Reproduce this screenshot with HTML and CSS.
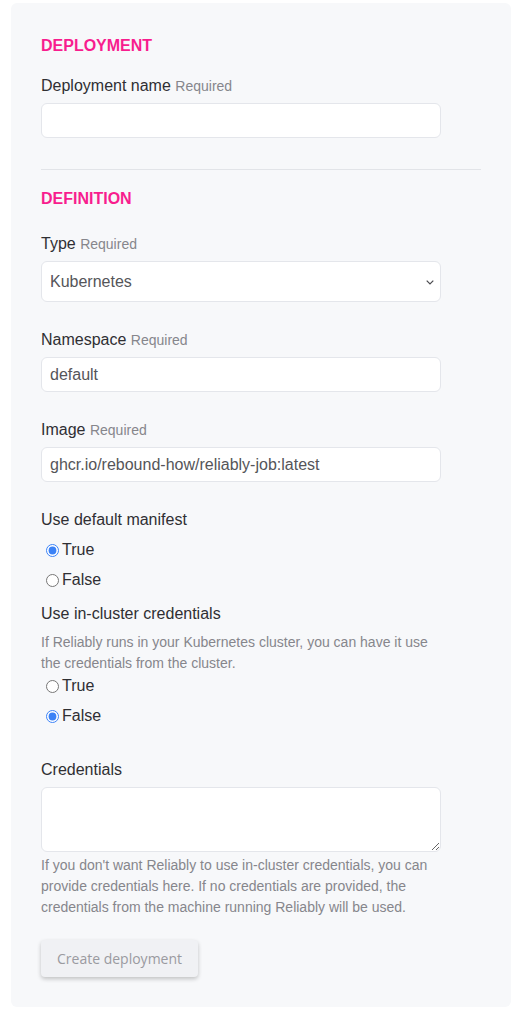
FILE: index.html
```html
<!DOCTYPE html>
<html lang="en">
<head>
<meta charset="utf-8">
<title>Create deployment</title>
<link rel="stylesheet" href="styles.css">
</head>
<body>
<form class="card">
  <h2 class="section-title">DEPLOYMENT</h2>
  <div class="field first">
    <label class="label">Deployment name <span class="req">Required</span></label>
    <input class="input" type="text">
  </div>
  <hr class="divider">
  <h2 class="section-title def">DEFINITION</h2>
  <div class="field type">
    <label class="label">Type <span class="req">Required</span></label>
    <div class="select-wrap">
      <select class="select"><option>Kubernetes</option></select>
      <svg class="chevron" width="8" height="5" viewBox="0 0 8 5" aria-hidden="true"><path d="M0.7 0.7 L4 4 L7.3 0.7" fill="none" stroke="#4a4a4f" stroke-width="1.2"/></svg>
    </div>
  </div>
  <div class="field gap">
    <label class="label">Namespace <span class="req">Required</span></label>
    <input class="input" type="text" value="default">
  </div>
  <div class="field gap">
    <label class="label">Image <span class="req">Required</span></label>
    <input class="input" type="text" value="ghcr.io/rebound-how/reliably-job:latest">
  </div>
  <div class="group gap">
    <div class="label">Use default manifest</div>
    <label class="radio r1"><input type="radio" name="manifest" checked>True</label>
    <label class="radio"><input type="radio" name="manifest">False</label>
  </div>
  <div class="group cluster">
    <div class="label">Use in-cluster credentials</div>
    <p class="help h1">If Reliably runs in your Kubernetes cluster, you can have it use the credentials from the cluster.</p>
    <label class="radio r0"><input type="radio" name="incluster">True</label>
    <label class="radio"><input type="radio" name="incluster" checked>False</label>
  </div>
  <div class="field creds">
    <label class="label">Credentials</label>
    <textarea class="textarea"></textarea>
    <p class="help h2">If you don't want Reliably to use in-cluster credentials, you can provide credentials here. If no credentials are provided, the credentials from the machine running Reliably will be used.</p>
  </div>
  <button type="button" class="btn">Create deployment</button>
</form>
</body>
</html>
```

FILE: styles.css
```css
html, body {
  margin: 0;
  padding: 0;
  background: #ffffff;
}
body {
  font-family: "Liberation Sans", Arial, sans-serif;
  color: #2f2f33;
}
.card {
  margin: 3px 0 0 11px;
  width: 500px;
  box-sizing: border-box;
  padding: 31px 30px 30px;
  background: #f7f8fa;
  border-radius: 6px;
  display: flex;
  flex-direction: column;
  align-items: flex-start;
}
.section-title {
  margin: 0;
  font-size: 16px;
  line-height: 24px;
  font-weight: 700;
  color: #f81d8e;
}
.section-title.def { margin-top: 17px; }
.field, .group {
  display: flex;
  flex-direction: column;
  align-items: flex-start;
  width: 400px;
}
.field.first { margin-top: 16px; }
.field.type { margin-top: 21px; }
.gap { margin-top: 26px; }
.label {
  display: block;
  font-size: 16px;
  line-height: 24px;
  color: #2f2f33;
}
.req {
  font-size: 14px;
  color: #86868c;
}
.input, .select, .textarea {
  margin-top: 5px;
  width: 400px;
  box-sizing: border-box;
  border: 1px solid #e4e6eb;
  border-radius: 6px;
  background: #ffffff;
  font-family: "Liberation Sans", Arial, sans-serif;
  font-size: 16px;
  color: #555559;
  padding: 0 8px;
  outline: none;
}
.input { height: 35px; }
.select-wrap {
  position: relative;
  width: 400px;
}
.select {
  height: 41px;
  display: block;
  appearance: none;
  -webkit-appearance: none;
}
.chevron {
  position: absolute;
  right: 7px;
  top: 24px;
}
.textarea {
  height: 65px;
  resize: vertical;
  display: block;
}
.divider {
  width: 440px;
  margin: 31px 0 0;
  border: 0;
  border-top: 1px solid #e2e4e8;
  height: 0;
}
.radio {
  display: flex;
  align-items: center;
  font-size: 16px;
  line-height: 24px;
  color: #2f2f33;
  margin-top: 6px;
}
.radio input {
  margin: 0 3px 0 5px;
  width: 13px;
  height: 13px;
  accent-color: #3b82f6;
}
.radio.r0 { margin-top: 0; }
.cluster { margin-top: 10px; }
.help {
  margin: 0;
  font-size: 14px;
  line-height: 21px;
  color: #86868c;
}
.help.h1 { margin-top: 6px; }
.help.h2 { margin-top: 3px; }
.creds { margin-top: 30px; }
.btn {
  margin-top: 22px;
  height: 37px;
  padding: 0 16px;
  border: 0;
  border-radius: 4px;
  background: #f0f1f4;
  box-shadow: 0 2px 4px rgba(0, 0, 0, 0.22);
  font-family: "Open Sans", sans-serif;
  font-size: 14px;
  color: #9a9aa0;
}
```
